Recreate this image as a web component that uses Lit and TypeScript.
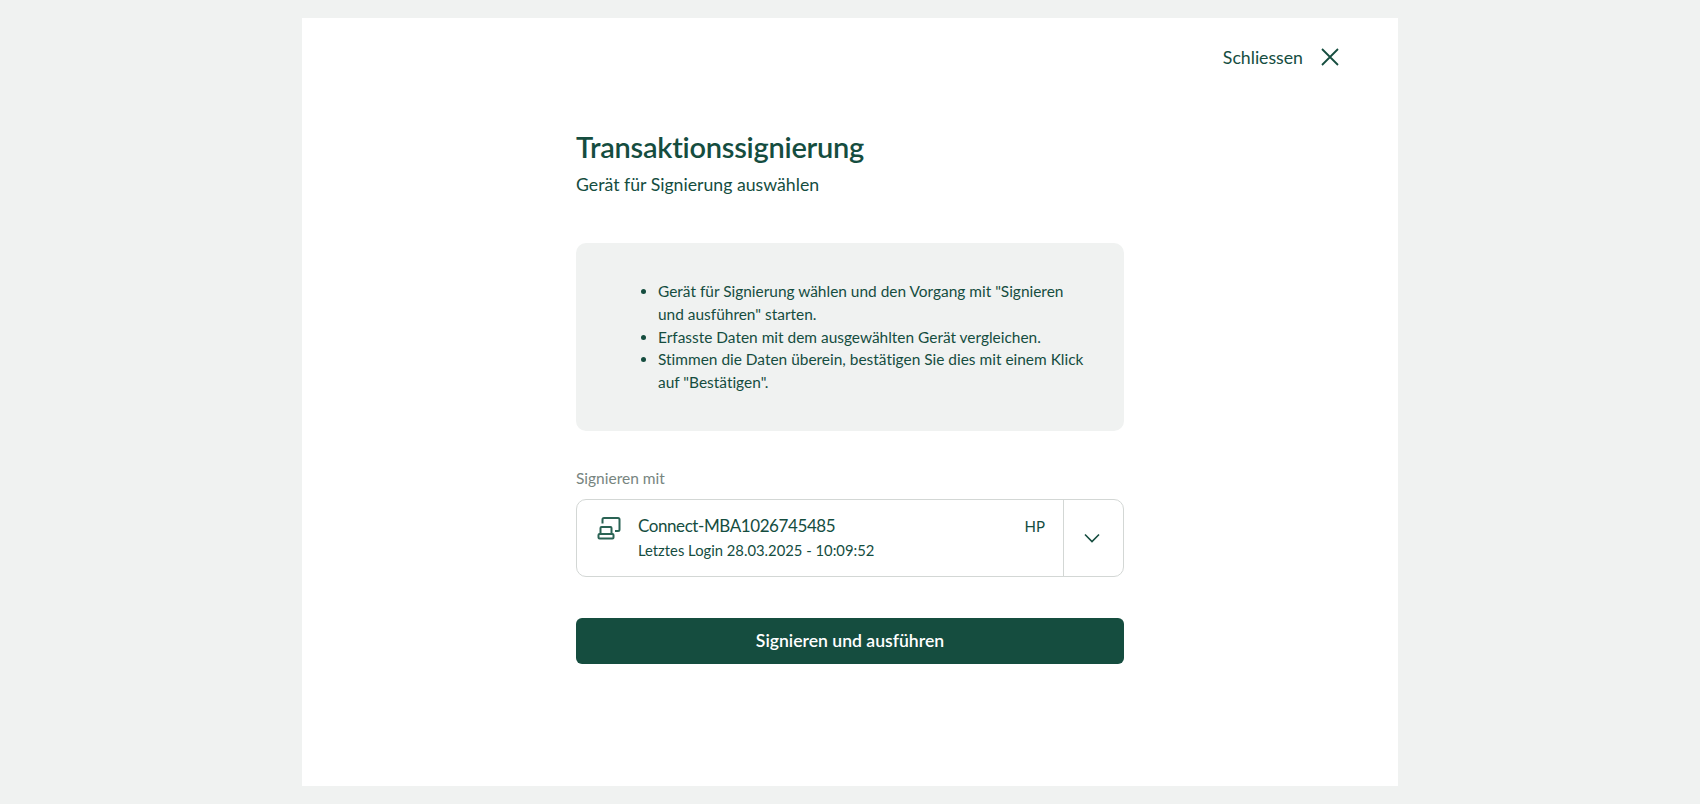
import { LitElement, html, css } from 'lit';
import { customElement } from 'lit/decorators.js';

@customElement('app-root')
export class AppRoot extends LitElement {
  static styles = css`
    :host {
      display: block;
      min-height: 804px;
      box-sizing: border-box;
      padding: 18px 0;
      background: #f0f2f1;
      font-family: 'Lato', 'Liberation Sans', sans-serif;
      font-variant-ligatures: none;
      color: #154d3f;
    }

    .panel {
      width: 1096px;
      height: 768px;
      margin-left: 302px;
      box-sizing: border-box;
      padding: 28px 58px 0 274px;
      background: #fff;
    }

    .close {
      display: flex;
      justify-content: flex-end;
      align-items: center;
      gap: 17px;
      height: 22px;
      font-size: 17.7px;
    }

    .close svg {
      display: block;
      width: 20px;
      height: 20px;
    }

    .content {
      width: 548px;
      margin-top: 60px;
    }

    h1 {
      margin: 0;
      font-size: 29px;
      line-height: 38px;
      font-weight: 600;
      letter-spacing: -0.25px;
    }

    .subtitle {
      margin-top: 7px;
      font-size: 17.7px;
      line-height: 24px;
    }

    .info {
      height: 188px;
      box-sizing: border-box;
      margin-top: 46px;
      padding: 37px 36px 0 0;
      border-radius: 10px;
      background: #f0f2f1;
      font-size: 15.45px;
      line-height: 22.8px;
    }

    .info ul {
      margin: 0;
      padding-left: 82px;
    }

    .label {
      margin-top: 37px;
      font-size: 15.5px;
      line-height: 20px;
      color: #77857f;
    }

    .select {
      display: flex;
      height: 78px;
      margin-top: 11px;
      box-sizing: border-box;
      border: 1px solid #d3d7d5;
      border-radius: 10px;
    }

    .device {
      flex: 1;
      display: flex;
      padding: 14px 18px 0 20px;
    }

    .device svg {
      display: block;
      width: 24px;
      height: 24px;
      margin: 2px 17px 0 0;
    }

    .names {
      flex: 1;
    }

    .name {
      font-size: 17px;
      line-height: 24px;
      letter-spacing: -0.42px;
    }

    .login {
      margin-top: 1px;
      font-size: 14.8px;
      line-height: 22px;
    }

    .type {
      font-size: 15px;
      line-height: 24px;
    }

    .toggle {
      width: 59px;
      display: flex;
      align-items: center;
      justify-content: center;
      border-left: 1px solid #d3d7d5;
    }

    .toggle svg {
      display: block;
      width: 16px;
      height: 10px;
      margin-right: 3px;
    }

    button {
      display: block;
      width: 100%;
      height: 45.5px;
      margin-top: 41px;
      border: none;
      border-radius: 6px;
      background: #154d3f;
      color: #fff;
      font: 600 17.6px 'Lato', 'Liberation Sans', sans-serif;
      font-variant-ligatures: none;
    }
  `;

  render() {
    return html`
      <div class="panel">
        <div class="close">
          <span>Schliessen</span>
          <svg viewBox="0 0 20 20" fill="none" stroke="#154d3f" stroke-width="1.8">
            <path d="M2 2l16 16M18 2L2 18" />
          </svg>
        </div>
        <div class="content">
          <h1>Transaktionssignierung</h1>
          <div class="subtitle">Gerät für Signierung auswählen</div>
          <div class="info">
            <ul>
              <li>Gerät für Signierung wählen und den Vorgang mit "Signieren und ausführen" starten.</li>
              <li>Erfasste Daten mit dem ausgewählten Gerät vergleichen.</li>
              <li>Stimmen die Daten überein, bestätigen Sie dies mit einem Klick auf "Bestätigen".</li>
            </ul>
          </div>
          <div class="label">Signieren mit</div>
          <div class="select">
            <div class="device">
              <svg viewBox="0 0 24 24" fill="none" stroke="#2a6354" stroke-width="2">
                <path d="M5.5 7.5V3.5A1.5 1.5 0 0 1 7 2h14a1.5 1.5 0 0 1 1.5 1.5v10A1.5 1.5 0 0 1 21 15h-3" />
                <path d="M3.5 18v-6a1 1 0 0 1 1-1h9a1 1 0 0 1 1 1v6" />
                <rect x="1.5" y="18" width="15" height="4.5" rx="1" />
              </svg>
              <div class="names">
                <div class="name">Connect-MBA1026745485</div>
                <div class="login">Letztes Login 28.03.2025 - 10:09:52</div>
              </div>
              <div class="type">HP</div>
            </div>
            <div class="toggle">
              <svg viewBox="0 0 16 10" fill="none" stroke="#154d3f" stroke-width="1.6">
                <path d="M1 1.5l7 7 7-7" />
              </svg>
            </div>
          </div>
          <button>Signieren und ausführen</button>
        </div>
      </div>
    `;
  }
}
